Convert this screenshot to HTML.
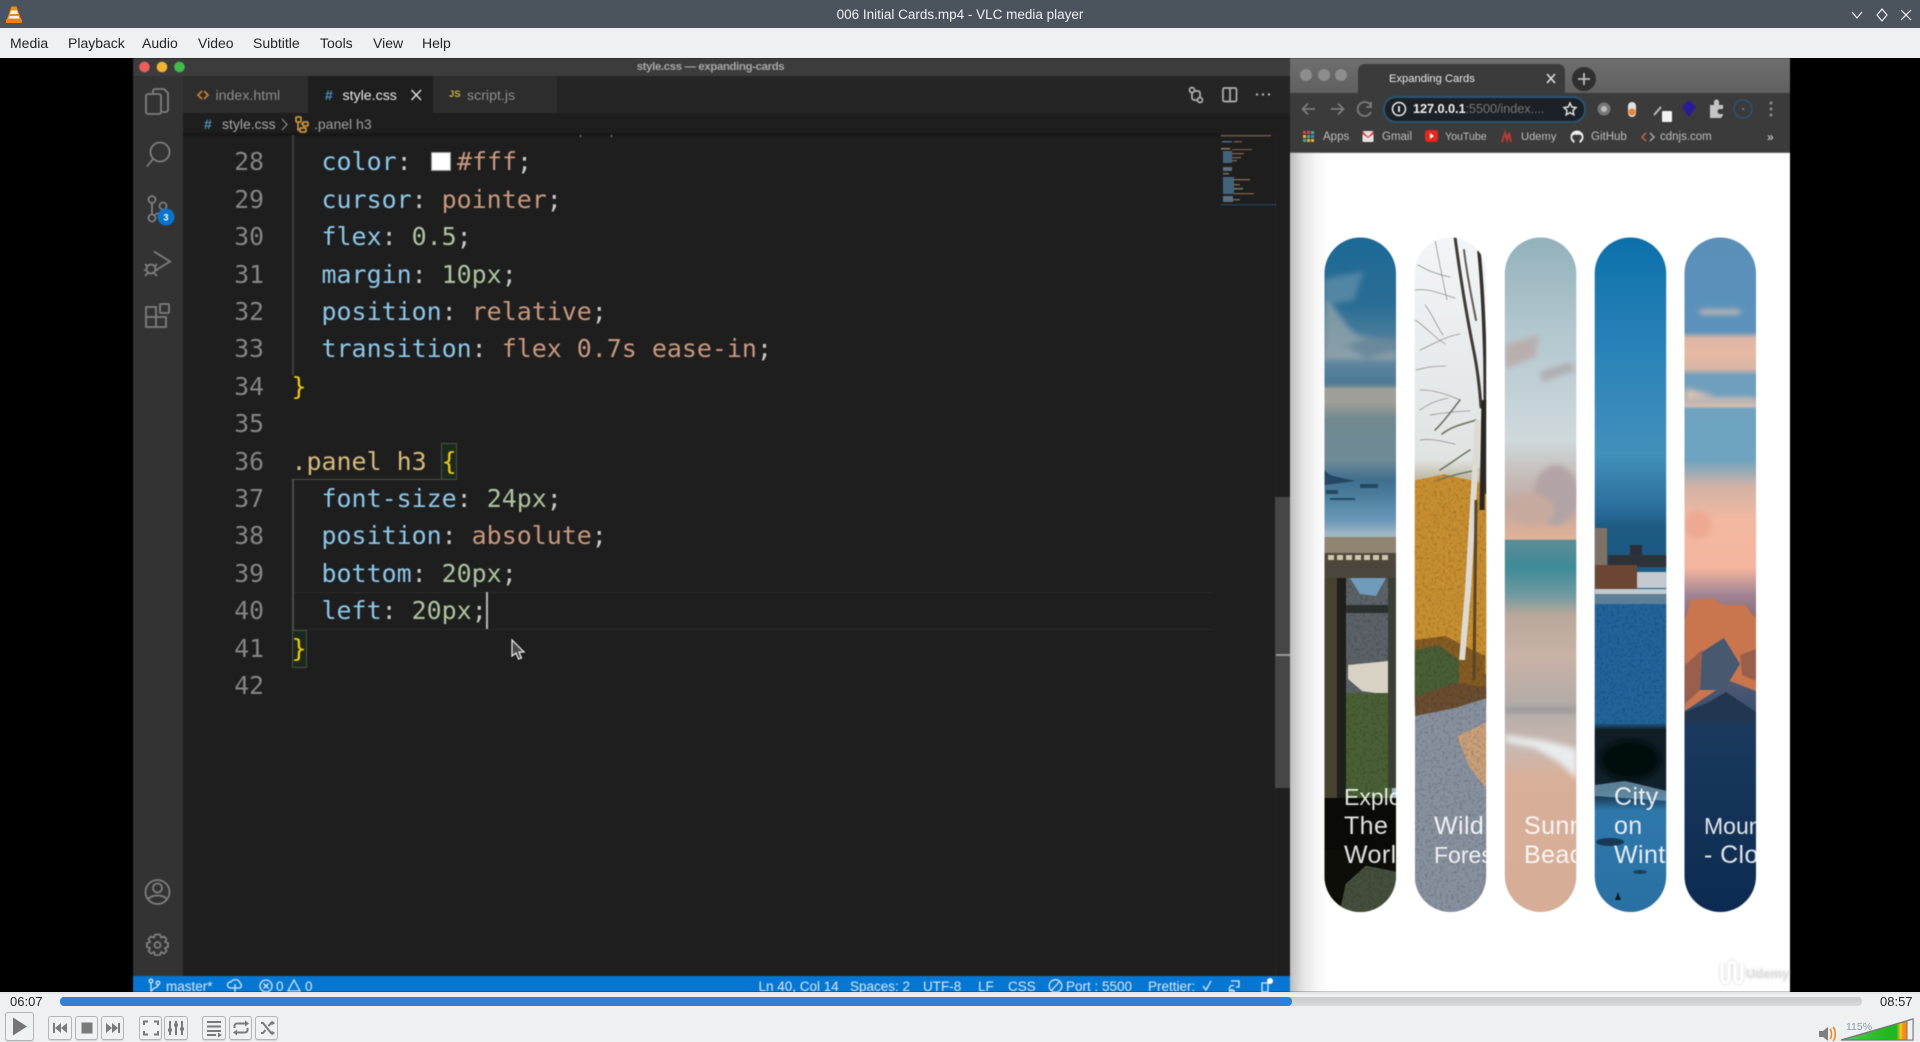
<!DOCTYPE html>
<html><head><meta charset="utf-8"><title>006 Initial Cards.mp4 - VLC media player</title>
<style>
*{box-sizing:border-box}
html,body{margin:0;padding:0;width:1920px;height:1042px;overflow:hidden;background:#000;font-family:"Liberation Sans",sans-serif}
.t{position:absolute;white-space:nowrap;line-height:20px}
.b{position:absolute}
#video{position:absolute;left:0;top:58px;width:1920px;height:934px;background:#000;overflow:hidden}
#vi{position:absolute;left:0;top:-58px;width:1920px;height:1042px;filter:blur(.5px)}
#code,#nums{position:absolute;top:143.3px;font-family:"DejaVu Sans Mono","Liberation Mono",monospace;line-height:37.4px;white-space:pre}
#nums{left:220px;width:44px;text-align:right;color:#858585;font-size:24.75px}
#code{left:291.5px;color:#d4d4d4;font-size:24.95px}
.p{color:#8cc7ea}.v{color:#c8987f}.n{color:#aec3a0}.s{color:#d7ba7d}.y{color:#f2c80f}.w{color:#c8c8c8}
.sw{display:inline-block;width:30.3px;height:19px;position:relative;vertical-align:-2px}
.sw i{position:absolute;left:4px;top:-1px;width:20px;height:19px;background:#fff;border:1px solid #999}
.m{font-size:14px;color:#232629;top:33px}
.st{font-size:13.5px;color:#d5e6f6;top:977px}
.tb{position:absolute;top:1016px;height:23.5px;width:23.5px;background:#f0f1f2;border:1px solid #b4b5b7;border-radius:3px;box-shadow:0 1px 0 #d5d6d8}
.tb svg{position:absolute;left:0;top:0;width:22px;height:22px}
</style></head><body>
<div class="b" style="left:0;top:0;width:1920px;height:28px;background:#4b535d"></div>
<div class="b" style="left:0;top:28px;width:1920px;height:30px;background:#eff0f1"></div>
<svg class="b" style="left:5px;top:5px" width="18" height="19" viewBox="0 0 18 19"><path d="M6.5 1.5h5l5 14H1.500z" fill="#f28b12"/><path d="M6 5.500h6l1 3.500H5zM4.500 11h9l1 2.500h-11z" fill="#f5f3ee"/><rect x="1" y="14" width="16" height="4" rx="1" fill="#ee7f10"/></svg>
<div class="t" style="left:0;width:1920px;text-align:center;top:5px;font-size:13.5px;color:#eef0f1">006 Initial Cards.mp4 - VLC media player</div>
<svg class="b" style="left:1850px;top:6px" width="66" height="18" fill="none" stroke="#eef0f2" stroke-width="1.200"><path d="M2 6l5 6 5-6M32 3l-5 6 5 6 5-6zM51 4l10 10M61 4L51 14"/></svg>
<span class="t m" style="left:10px">Media</span><span class="t m" style="left:68px">Playback</span><span class="t m" style="left:142px">Audio</span><span class="t m" style="left:198px">Video</span><span class="t m" style="left:253px">Subtitle</span><span class="t m" style="left:320px">Tools</span><span class="t m" style="left:373px">View</span><span class="t m" style="left:422px">Help</span>

<div id="video"><div id="vi">
<!-- VS Code window -->
<div class="b" style="left:132.500px;top:58px;width:1157.500px;height:934px;background:#1e1e1e"></div>
<div class="b" style="left:132.500px;top:58px;width:1157.500px;height:18px;background:#3c3c3c"></div>
<div class="b" style="left:132.500px;top:76px;width:50.500px;height:900px;background:#333"></div>
<div class="b" style="left:183px;top:76px;width:1107px;height:37px;background:#252526"></div>
<div class="b" style="left:183px;top:76px;width:125px;height:37px;background:#2d2d2d"></div>
<div class="b" style="left:308px;top:76px;width:125px;height:37px;background:#1e1e1e"></div>
<div class="b" style="left:433px;top:76px;width:124px;height:37px;background:#2d2d2d"></div>
<div class="b" style="left:183px;top:133px;width:1037px;height:3px;background:#171717"></div>
<div class="t" style="left:132px;width:1157px;text-align:center;top:57px;font-size:11.300px;color:#a8a8a8;font-weight:bold;letter-spacing:-.3px">style.css — expanding-cards</div>
<span class="t" style="left:215.500px;top:85.500px;font-size:14.200px;color:#8d8d8d">index.html</span>
<span class="t" style="left:342.500px;top:85.500px;font-size:14.200px;color:#e8e8e8">style.css</span>
<span class="t" style="left:467px;top:85.500px;font-size:14.200px;color:#8d8d8d">script.js</span>
<span class="t" style="left:325px;top:85px;font-size:14px;font-weight:bold;color:#4f93bd">#</span>
<span class="t" style="left:204px;top:114px;font-size:14px;font-weight:bold;color:#4f93bd">#</span>
<span class="t" style="left:449px;top:85px;font-size:9.500px;font-weight:bold;color:#c0b03c">JS</span>
<span class="t" style="left:222px;top:114px;font-size:14px;color:#a8a8a8">style.css</span>
<span class="t" style="left:314px;top:114px;font-size:14px;color:#a0a0a0">.panel h3</span>

<!-- status bar -->
<div class="b" style="left:132.500px;top:976px;width:1157.500px;height:16px;background:#0577d2"></div>
<span class="t st" style="left:166px">master*</span><span class="t st" style="left:276px">0</span><span class="t st" style="left:305px">0</span>
<span class="t st" style="left:758.500px">Ln 40, Col 14</span><span class="t st" style="left:850px">Spaces: 2</span><span class="t st" style="left:923px">UTF-8</span><span class="t st" style="left:978px">LF</span><span class="t st" style="left:1008px">CSS</span><span class="t st" style="left:1066px">Port : 5500</span><span class="t st" style="left:1148px">Prettier:</span>

<!-- code -->
<div class="b" style="left:293px;top:591.500px;width:920px;height:38px;border-top:1.500px solid #2b2b2b;border-bottom:1.500px solid #2b2b2b"></div>
<div class="b" style="left:292px;top:135px;width:1.500px;height:240px;background:#3e3e3e"></div>
<div class="b" style="left:292px;top:479px;width:1.500px;height:152px;background:#4c4c4c"></div>
<div class="b" style="left:292px;top:478.500px;width:150px;height:1.500px;background:#52503f"></div>
<div class="b" style="left:440.500px;top:442.500px;width:16px;height:37.500px;border:1.500px solid #4a4f46;background:#1c2a1e"></div>
<div class="b" style="left:292px;top:630px;width:14.500px;height:37.500px;border:1.500px solid #4a4f46;background:#1c2a1e"></div>
<div id="nums">28
29
30
31
32
33
34
35
36
37
38
39
40
41
42</div>
<div id="code"><span class="p">  color</span><span class="w">: </span><span class="sw"><i></i></span><span class="v">#fff</span><span class="w">;</span>
<span class="p">  cursor</span><span class="w">: </span><span class="v">pointer</span><span class="w">;</span>
<span class="p">  flex</span><span class="w">: </span><span class="n">0.5</span><span class="w">;</span>
<span class="p">  margin</span><span class="w">: </span><span class="n">10px</span><span class="w">;</span>
<span class="p">  position</span><span class="w">: </span><span class="v">relative</span><span class="w">;</span>
<span class="p">  transition</span><span class="w">: </span><span class="v">flex 0.7s ease-in</span><span class="w">;</span>
<span class="y">}</span>

<span class="s">.panel h3 </span><span class="y">{</span>
<span class="p">  font-size</span><span class="w">: </span><span class="n">24px</span><span class="w">;</span>
<span class="p">  position</span><span class="w">: </span><span class="v">absolute</span><span class="w">;</span>
<span class="p">  bottom</span><span class="w">: </span><span class="n">20px</span><span class="w">;</span>
<span class="p">  left</span><span class="w">: </span><span class="n">20px</span><span class="w">;</span>
<span class="y">}</span></div>
<div class="b" style="left:486px;top:592px;width:2px;height:37px;background:#b5b5b5"></div>

<!-- scrollbar & minimap -->
<div class="b" style="left:1275px;top:135px;width:1px;height:841px;background:#2a2a2a"></div>
<div class="b" style="left:1275px;top:497px;width:15px;height:291px;background:#464646"></div>
<div class="b" style="left:1276px;top:654px;width:14px;height:2px;background:#9a9a9a"></div>
<svg class="b" style="left:1208px;top:130px;opacity:.75" width="70" height="80">
<g fill="#8a6a5c"><rect x="13" y="5" width="50" height="1.500"/></g>
<rect x="14" y="11" width="10" height="1.500" fill="#5a8aa8"/><rect x="26" y="11" width="8" height="1.500" fill="#8a6a5c"/>
<rect x="13" y="18" width="9" height="1.500" fill="#b5a070"/><rect x="24" y="19" width="20" height="1.200" fill="#8a6a5c"/>
<rect x="15" y="21" width="9" height="12" fill="#4d7c9a"/><rect x="24" y="23" width="12" height="1.300" fill="#9a7a60"/><rect x="24" y="27" width="9" height="1.300" fill="#9a7a60"/><rect x="24" y="30" width="5" height="1.300" fill="#9a7a60"/>
<rect x="15" y="37" width="9" height="4" fill="#6a8aa0"/><rect x="15" y="43" width="6" height="1.500" fill="#a09070"/>
<rect x="15" y="47" width="11" height="17" fill="#4d7c9a"/><rect x="26" y="49" width="16" height="1.500" fill="#9a7a60"/><rect x="26" y="54" width="6" height="1.500" fill="#9a7a60"/><rect x="26" y="58" width="9" height="1.500" fill="#8aa080"/><rect x="26" y="63" width="20" height="1.300" fill="#9a7a60"/>
<rect x="15" y="66" width="10" height="6" fill="#6a8aa0"/><rect x="25" y="69" width="7" height="1.500" fill="#9a7a60"/>
<rect x="13" y="74" width="55" height="1.500" fill="#28465c"/>
</svg>

<!-- Browser -->
<div class="b" style="left:1290px;top:58px;width:500px;height:35px;background:linear-gradient(#6f6f6f,#606060)"></div>
<div class="b" style="left:1290px;top:93px;width:500px;height:60px;background:#3b3b3b"></div>
<div class="b" style="left:1290px;top:152px;width:500px;height:1px;background:#666"></div>
<div class="b" style="left:1358px;top:64px;width:207px;height:29px;background:#3b3b3b;border-radius:7px 7px 0 0"></div>
<div class="b" style="left:1290px;top:153px;width:500px;height:839px;background:linear-gradient(90deg,#bdbdbd 0,#e2e2e2 12px,#f6f6f6 26px,#fff 40px)"></div>
<span class="t" style="left:1389px;top:69px;font-size:11.200px;color:#e8e8e8">Expanding Cards</span>
<div class="b" style="left:1383px;top:96px;width:203px;height:27px;border-radius:13px;background:#1b2126;border:2px solid #2a5474"></div>
<span class="t" style="left:1413px;top:99px;font-size:12.800px;color:#f0f0f0;font-weight:bold;letter-spacing:-.1px">127.0.0.1<span style="color:#777;font-weight:normal">:5500/index....</span></span>
<span class="t" style="left:1323px;top:127px;font-size:11.500px;color:#bdbdbd">Apps</span>
<span class="t" style="left:1382px;top:127px;font-size:11.500px;color:#bdbdbd">Gmail</span>
<span class="t" style="left:1445px;top:127px;font-size:10.600px;color:#bdbdbd">YouTube</span>
<span class="t" style="left:1521px;top:127px;font-size:11.200px;color:#bdbdbd">Udemy</span>
<span class="t" style="left:1591px;top:127px;font-size:11.500px;color:#bdbdbd">GitHub</span>
<span class="t" style="left:1660px;top:127px;font-size:11.500px;color:#bdbdbd">cdnjs.com</span>
<span class="t" style="left:1767px;top:127px;font-size:12px;font-weight:bold;color:#bdbdbd">»</span>

<svg class="b" style="left:0;top:0" width="1920" height="1042" viewBox="0 0 1920 1042">
<defs>
<clipPath id="c1"><rect x="1324.500" y="237.500" width="71.500" height="674.500" rx="35.700"/></clipPath>
<clipPath id="c2"><rect x="1414.700" y="237.500" width="71.500" height="674.500" rx="35.700"/></clipPath>
<clipPath id="c3"><rect x="1504.800" y="237.500" width="71.500" height="674.500" rx="35.700"/></clipPath>
<clipPath id="c4"><rect x="1594.700" y="237.500" width="71.500" height="674.500" rx="35.700"/></clipPath>
<clipPath id="c5"><rect x="1684.500" y="237.500" width="71.500" height="674.500" rx="35.700"/></clipPath>
<linearGradient id="g1" x1="0" x2="0" y1="237" y2="912" gradientUnits="userSpaceOnUse">
<stop offset="0" stop-color="#1c6a97"/><stop offset=".1" stop-color="#2a6d94"/><stop offset=".18" stop-color="#5f88a0"/><stop offset=".215" stop-color="#4f7a94"/><stop offset=".22" stop-color="#5f8296"/><stop offset=".225" stop-color="#a09e98"/><stop offset=".245" stop-color="#a09e98"/><stop offset=".27" stop-color="#70898f"/><stop offset=".33" stop-color="#6f8b96"/><stop offset=".36" stop-color="#3f6f8e"/><stop offset=".38" stop-color="#4b7c9c"/><stop offset=".42" stop-color="#6a98b8"/><stop offset=".44" stop-color="#9db6c6"/><stop offset="1" stop-color="#9db6c6"/></linearGradient>
<linearGradient id="g3" x1="0" x2="0" y1="237" y2="912" gradientUnits="userSpaceOnUse">
<stop offset="0" stop-color="#92b1ba"/><stop offset=".14" stop-color="#b3c7cf"/><stop offset=".3" stop-color="#cfd9dc"/><stop offset=".36" stop-color="#c4bab6"/><stop offset=".4" stop-color="#c2a89d"/><stop offset=".448" stop-color="#e2b297"/><stop offset=".449" stop-color="#5c8c96"/><stop offset=".49" stop-color="#3f8b99"/><stop offset=".53" stop-color="#6f9aa0"/><stop offset=".56" stop-color="#b8a89b"/><stop offset=".62" stop-color="#c9b2a6"/><stop offset=".69" stop-color="#b3aca8"/><stop offset=".76" stop-color="#c9b8b0"/><stop offset=".8" stop-color="#d8b09a"/><stop offset="1" stop-color="#d6ae98"/></linearGradient>
<linearGradient id="g4" x1="0" x2="0" y1="237" y2="912" gradientUnits="userSpaceOnUse">
<stop offset="0" stop-color="#0c70aa"/><stop offset=".17" stop-color="#2a83b8"/><stop offset=".32" stop-color="#4290bc"/><stop offset=".4" stop-color="#2b6f9d"/><stop offset=".43" stop-color="#1e5a82"/><stop offset=".54" stop-color="#1c5a86"/><stop offset=".62" stop-color="#1f608f"/><stop offset=".72" stop-color="#1f6089"/><stop offset=".73" stop-color="#101d25"/><stop offset=".82" stop-color="#10222c"/><stop offset=".85" stop-color="#2f78ac"/><stop offset="1" stop-color="#2a70a2"/></linearGradient>
<linearGradient id="g5" x1="0" x2="0" y1="237" y2="912" gradientUnits="userSpaceOnUse">
<stop offset="0" stop-color="#5a8fb8"/><stop offset=".14" stop-color="#5b92bc"/><stop offset=".15" stop-color="#dcb6a6"/><stop offset=".17" stop-color="#e8b9a2"/><stop offset=".195" stop-color="#d9b5a6"/><stop offset=".205" stop-color="#709fbd"/><stop offset=".235" stop-color="#6d9fbe"/><stop offset=".25" stop-color="#d8bcae"/><stop offset=".255" stop-color="#6fa3c0"/><stop offset=".33" stop-color="#6ea4bf"/><stop offset=".37" stop-color="#d3b3a6"/><stop offset=".42" stop-color="#f2b9a0"/><stop offset=".49" stop-color="#f5b69e"/><stop offset=".53" stop-color="#a08494"/><stop offset=".56" stop-color="#8c6f78"/><stop offset=".7" stop-color="#3b5070"/><stop offset=".71" stop-color="#1b3a5e"/><stop offset="1" stop-color="#0c2b52"/></linearGradient>
<linearGradient id="g2" x1="0" x2="0" y1="237" y2="912" gradientUnits="userSpaceOnUse">
<stop offset="0" stop-color="#f3f5f7"/><stop offset=".33" stop-color="#dfe3e2"/><stop offset=".36" stop-color="#bdb6a0"/><stop offset=".4" stop-color="#c99332"/><stop offset=".6" stop-color="#a87a30"/><stop offset=".63" stop-color="#4d5a32"/><stop offset=".67" stop-color="#5f5030"/><stop offset=".7" stop-color="#79818e"/><stop offset=".85" stop-color="#6d7889"/><stop offset="1" stop-color="#5a6678"/></linearGradient>
<filter id="bl"><feGaussianBlur stdDeviation="3"/></filter>
<filter id="sh" x="-20%" y="-40%" width="140%" height="180%"><feGaussianBlur in="SourceAlpha" stdDeviation="1.500"/><feColorMatrix values="0 0 0 0 .55 0 0 0 0 .55 0 0 0 0 .55 0 0 0 .8 0"/><feMerge><feMergeNode/><feMergeNode in="SourceGraphic"/></feMerge></filter>
<filter id="mot" x="0" y="0" width="1" height="1"><feTurbulence type="fractalNoise" baseFrequency=".35" numOctaves="2" seed="4" result="n"/><feColorMatrix in="n" values=".9 0 0 0 .5 .9 0 0 0 .5 .9 0 0 0 .5 0 0 0 0 1" result="g"/><feBlend in="SourceGraphic" in2="g" mode="multiply" result="m"/><feComposite in="m" in2="SourceAlpha" operator="in"/></filter>
</defs>

<!-- Card 1 -->
<g clip-path="url(#c1)">
<rect x="1324" y="237" width="73" height="675" fill="url(#g1)"/>
<g filter="url(#bl)"><path d="M1324 300c14 4 20 30 36 36l36 4v20h-72z" fill="#a3acae" opacity=".65"/><path d="M1345 345l25-8 26 2v12l-30 8z" fill="#5e8099" opacity=".7"/><path d="M1324 280c10-6 30-4 40-10l-10 30-30 6z" fill="#7da0b4" opacity=".5"/></g>
<path d="M1324 470l6 5 16 4 10 2-32 4zM1326 490h12v4h-12zM1360 484h18v4h-18zM1330 498h25v2h-25z" fill="#254862"/>
<rect x="1324" y="537" width="73" height="16" fill="#8f8571"/><rect x="1324" y="553" width="73" height="9" fill="#4f483a"/><g fill="#cfc6b0"><rect x="1328" y="555" width="6" height="5"/><rect x="1337" y="555" width="6" height="5"/><rect x="1346" y="555" width="6" height="5"/><rect x="1355" y="555" width="6" height="5"/><rect x="1364" y="555" width="6" height="5"/><rect x="1373" y="555" width="6" height="5"/><rect x="1382" y="555" width="6" height="5"/></g>
<rect x="1324" y="562" width="73" height="18" fill="#4a463c"/>
<g filter="url(#mot)"><rect x="1346" y="578" width="44" height="120" fill="#5c6268"/></g>
<path d="M1350 578h36l-10 18-16-2z" fill="#6f9cbc"/>
<path d="M1346 605h44v8h-44z" fill="#2c2f2d"/>
<path d="M1348 665l40-4v34l-26-4-14-12z" fill="#d8d2c4"/>
<g filter="url(#mot)"><rect x="1346" y="693" width="46" height="112" fill="#4a6034"/></g>
<rect x="1324" y="578" width="22" height="332" fill="#45422f"/><rect x="1337" y="578" width="9" height="270" fill="#1e1f1a"/>
<rect x="1388" y="578" width="9" height="210" fill="#3a3f35"/>
<rect x="1324" y="798" width="73" height="60" fill="#0a0a06"/>
<rect x="1324" y="850" width="73" height="62" fill="#0d0e08"/>
<g filter="url(#mot)"><path d="M1340 912l6-28 20-18 30 6v40z" fill="#454f3b"/></g>
</g>
<!-- Card 2 -->
<g clip-path="url(#c2)">
<rect x="1414" y="237" width="73" height="470" fill="url(#g2)"/>
<g filter="url(#mot)"><path d="M1415 480l30-6 42 10v190l-72 0z" fill="#c88f30"/><path d="M1415 640l30-4 40 20v40l-70 10z" fill="#855c24"/><path d="M1415 650l24-5 20 15 0 30-44 10z" fill="#4a5f34"/><path d="M1415 697l40-14 32 4v15l-72 15z" fill="#6a4e30"/><path d="M1415 716l40-8 32-10v216h-72z" fill="#88919f"/><path d="M1487 722l-30 14 12 30 18 24z" fill="#c9a07a"/></g>
<g fill="none" stroke-linecap="round">
<path d="M1455 237c4 30 10 70 18 110 5 24 7 45 8 60" stroke="#3f3a36" stroke-width="3"/><path d="M1479 252c3 30 5 70 6 110l1 130" stroke="#35302c" stroke-width="3.500"/><path d="M1464 250c3 25 8 50 12 70" stroke="#615b55" stroke-width="2"/>
<path d="M1415 290c14-2 26 4 40 8M1420 350c14-6 26-14 40-16M1415 320c10 6 20 18 30 24M1420 390c14 0 26 4 40 10M1435 240c4 20 8 42 12 60M1416 370c10-3 20-4 30-4M1430 415c14-2 26-4 40-4M1420 440c12-2 24 2 35 4M1418 265c10 6 22 10 32 12M1425 305c8 10 12 22 18 30M1420 410c8-6 18-10 28-12" stroke="#95928f" stroke-width=".8"/>
<path d="M1460 400c-8 10-16 22-25 30M1470 450c-10 6-20 14-30 20M1478 470c-12 2-28 6-40 10M1476 420c-12 4-24 6-34 14" stroke="#6b7668" stroke-width="1.600"/>
</g>
<path d="M1478 420l-10 170-6 70" fill="none" stroke="#dcdad2" stroke-width="6"/>
<path d="M1484 400l-2 110" fill="none" stroke="#2a2622" stroke-width="5"/><path d="M1476 500l-2 180" fill="none" stroke="#5a4526" stroke-width="3"/>
</g>
<!-- Card 3 -->
<g clip-path="url(#c3)">
<rect x="1504" y="237" width="73" height="675" fill="url(#g3)"/>
<g filter="url(#bl)"><path d="M1505 345l34-10-4 22-30 12z" fill="#b9a7a5" opacity=".8"/><path d="M1540 372l30-10 6 8-34 12z" fill="#aaa6a6" opacity=".8"/><ellipse cx="1556" cy="495" rx="22" ry="30" fill="#b2a3a6"/><ellipse cx="1532" cy="510" rx="22" ry="16" fill="#c7aa9e"/></g>
<g filter="url(#bl)"><path d="M1505 742l30 6 25 15 17 16v-30l-30-8-42-6z" fill="#e8ecee"/><path d="M1505 708h72v4h-72z" fill="#7a8084" opacity=".7"/></g>
</g>
<!-- Card 4 -->
<g clip-path="url(#c4)">
<rect x="1594" y="237" width="73" height="675" fill="url(#g4)"/>
<rect x="1595" y="528" width="12" height="45" fill="#7e7264"/>
<rect x="1630" y="545" width="12" height="22" fill="#2c2f35"/><rect x="1608" y="555" width="60" height="12" fill="#2c3238"/>
<rect x="1595" y="565" width="42" height="24" fill="#6c4634"/><rect x="1637" y="572" width="30" height="16" fill="#c4c9cf"/>
<rect x="1595" y="589" width="73" height="5" fill="#c0cad2"/><rect x="1595" y="594" width="73" height="10" fill="#5f7f96"/>
<g filter="url(#mot)"><rect x="1595" y="604" width="73" height="120" fill="#22649a"/></g>
<g filter="url(#bl)"><ellipse cx="1630" cy="760" rx="30" ry="20" fill="#05090c"/></g>
<path d="M1595 785l30-4 42 10v10l-72-5z" fill="#7daac8" opacity=".7"/>
<ellipse cx="1610" cy="842" rx="14" ry="4" fill="#163a55"/><ellipse cx="1640" cy="872" rx="7" ry="2" fill="#1a3f5a"/><path d="M1615 900l3-8 3 8z" fill="#0d1c28"/>
</g>
<!-- Card 5 -->
<g clip-path="url(#c5)">
<rect x="1684" y="237" width="73" height="675" fill="url(#g5)"/>
<g filter="url(#bl)"><path d="M1685 388l30 8-30 2zM1685 398h70v3h-70zM1700 310h40v4h-40z" fill="#e0c2b0"/><ellipse cx="1698" cy="525" rx="14" ry="14" fill="#eda992"/></g>
<path d="M1685 620l6-20 22-2 10 7 22 0 11 14v72l-26-10-30 20-15 10z" fill="#c9764f"/>
<path d="M1702 652l22-14 16 26-16 26-24 0z" fill="#47586f"/><path d="M1685 665l17-15-2 40-15 14zM1740 655l16-6 0 32-14-6z" fill="#9a5f4c"/>
<path d="M1685 712l24-10 17-10 15 10 15 10v10h-71z" fill="#22374f"/>
</g>
<g font-family="Liberation Sans,sans-serif" font-size="25" letter-spacing=".4" fill="#fff" fill-opacity=".88">
<g clip-path="url(#c1)"><text x="1344" y="805" font-size="23" letter-spacing="0">Explore</text><text x="1344" y="834">The</text><text x="1344" y="863">World</text></g>
<g clip-path="url(#c2)"><text x="1434" y="834">Wild</text><text x="1434" y="863" font-size="23" letter-spacing="0">Forest</text></g>
<g clip-path="url(#c3)"><text x="1524" y="834">Sunny</text><text x="1524" y="863">Beach</text></g>
<g clip-path="url(#c4)"><text x="1614" y="805">City</text><text x="1614" y="834">on</text><text x="1614" y="863">Winter</text></g>
<g clip-path="url(#c5)"><text x="1704" y="834" font-size="23" letter-spacing="0">Mountains</text><text x="1704" y="863">- Clouds</text></g>
</g>
<!-- Udemy watermark -->
<g filter="url(#sh)"><path d="M1722 964v12c0 9 7 9 7 0v-10c0-5 6-5 6 0v10c0 9 7 9 7 0v-12" fill="none" stroke="#fff" stroke-width="3"/>
<text x="1746" y="978" font-family="Liberation Sans,sans-serif" font-size="13" font-weight="bold" fill="#e4e4e4">Udemy</text></g>

<!-- traffic lights -->
<circle cx="144.500" cy="67" r="5.300" fill="#ec5f56"/><circle cx="162" cy="67" r="5.300" fill="#f4b32f"/><circle cx="179.500" cy="67" r="5.300" fill="#3fbc4a"/>

<!-- activity icons -->
<g fill="none" stroke="#7e7e7e" stroke-width="1.800">
<path d="M153 94v-3a2 2 0 0 1 2-2h9l4 4v17a2 2 0 0 1-2 2h-4"/><path d="M148 94h11a2 2 0 0 1 2 2v16a2 2 0 0 1-2 2h-11a2 2 0 0 1-2-2V96a2 2 0 0 1 2-2z"/>
<circle cx="160" cy="152" r="9.500"/><path d="M153 159l-6 7.500"/>
<circle cx="152" cy="199.500" r="3.500"/><circle cx="163" cy="206" r="3.500"/><circle cx="152" cy="218" r="3.500"/><path d="M152 203v11.500M163 209.500c0 4-6 3-9 6"/>
<path d="M154 251.500l16 10-13 8"/><circle cx="151" cy="269" r="4.500"/><path d="M145 264l3 3M157 264l-3 3M144 270h3M158 270h-3M145 276l3-3M157 276l-3-3"/>
<path d="M146 307h10v10h10v10h-20zM146 317h10v10"/><rect x="160" y="304" width="9" height="9" rx="1"/>
<circle cx="157.500" cy="892" r="12"/><circle cx="157.500" cy="888" r="4.500"/><path d="M148 900c2-6 17-6 19 0"/>
<circle cx="157.500" cy="945" r="3"/><path d="M157.500 934.500l2.500 0 1 3 3-1 2.500 2.500-1.500 3 3 1v4l-3 1 1.500 3-2.500 2.500-3-1.500-1 3h-5l-1-3-3 1.500-2.500-2.500 1.500-3-3-1v-4l3-1-1.500-3 2.500-2.500 3 1 1-3z"/>
</g>
<circle cx="166" cy="217" r="8.500" fill="#0a74cc"/><text x="166" y="220.500" font-family="Liberation Sans,sans-serif" font-size="9" font-weight="bold" fill="#fff" text-anchor="middle">3</text>

<!-- tab & breadcrumb icons -->
<path d="M202 91l-4 4 4 4M204 91l4 4-4 4" fill="none" stroke="#c67a35" stroke-width="1.800"/>
<path d="M411.500 90l9.500 10M421 90l-9.500 10" stroke="#e0e0e0" stroke-width="1.400"/>
<path d="M282 119l5 5.500-5 5.500" fill="none" stroke="#8a8a8a" stroke-width="1.200"/>
<g fill="none" stroke="#c9923e" stroke-width="1.700"><rect x="296" y="117" width="5" height="5" rx="1"/><rect x="303" y="122" width="5" height="4" rx="1"/><rect x="300" y="128" width="6" height="4" rx="1"/><path d="M298 122v8h2M301 124h2"/></g>
<path d="M580 136h1M611 136h1" stroke="#8a9a80" stroke-width="2"/>
<!-- editor actions -->
<g fill="none" stroke="#b0b0b0" stroke-width="1.700"><circle cx="1192" cy="90" r="2.500"/><circle cx="1200" cy="100" r="2.500"/><path d="M1194 91h4a2 2 0 0 1 2 2v5M1192 93v5a2 2 0 0 0 2 2h4"/><rect x="1223" y="88" width="13.500" height="13.500" rx="1.500"/><path d="M1230 88v13.500"/></g>
<g fill="#b0b0b0"><circle cx="1257" cy="94.500" r="1.200"/><circle cx="1263" cy="94.500" r="1.200"/><circle cx="1269" cy="94.500" r="1.200"/></g>
<!-- status icons -->
<g fill="none" stroke="#d5e6f6" stroke-width="1.300">
<circle cx="151" cy="981" r="1.800"/><circle cx="158" cy="983" r="1.800"/><path d="M151 983v9M158 985c0 3-5 2-6 6"/>
<path d="M230 988a3 3 0 0 1 1-6 5 5 0 0 1 9 1 3 3 0 0 1 0 5zM235 984v8"/>
<circle cx="266" cy="986" r="6"/><path d="M263.500 983.500l5 5M268.500 983.500l-5 5"/>
<path d="M294 980l6 11h-12z"/>
<circle cx="1055.500" cy="986" r="6.300"/><path d="M1051 991l9-10"/>
<path d="M1203 986l3 4 5-9"/>
<path d="M1231 981h8v6h-3M1234 986a3 3 0 1 0 0 5M1229 992c1-3 4-3 6 0"/>
<path d="M1262 983h6v9h-6z"/>
</g>
<circle cx="1270" cy="981" r="3" fill="#fff"/>

<!-- browser chrome icons -->
<g fill="#8d8d8d"><circle cx="1306" cy="75" r="6"/><circle cx="1324" cy="75" r="6"/><circle cx="1341" cy="75" r="6"/></g>
<path d="M1547 74l8 9M1555 74l-8 9" stroke="#ddd" stroke-width="1.600"/>
<circle cx="1584" cy="79" r="12" fill="#303030"/><path d="M1584 73v12M1578 79h12" stroke="#bbb" stroke-width="1.800"/>
<g fill="none" stroke="#7c7c7c" stroke-width="1.800"><path d="M1315 109h-12M1308 103.500l-5.500 5.500 5.500 5.500M1331 109h12M1338 103.500l5.500 5.500-5.500 5.500"/><path d="M1371 106a7 7 0 1 0 0 6M1371 102v5h-5"/></g>
<circle cx="1399" cy="109" r="6.500" fill="none" stroke="#eee" stroke-width="1.500"/><path d="M1399 106v6" stroke="#eee" stroke-width="1.800"/>
<path d="M1570 103l1.800 4 4.200.5-3 3 .8 4.300-3.800-2.200-3.800 2.200.8-4.300-3-3 4.200-.5z" fill="none" stroke="#ddd" stroke-width="1.500"/>
<circle cx="1604" cy="109" r="6.500" fill="#777"/><circle cx="1604" cy="109" r="3" fill="#bbb"/>
<rect x="1628" y="102" width="8" height="15" rx="4" fill="#e4e0dc"/><circle cx="1632" cy="112" r="3.500" fill="#e7873a"/>
<path d="M1654 115l7-8" stroke="#bbb" stroke-width="2"/><rect x="1662" y="111" width="10" height="11" rx="1" fill="#f2f2f2"/>
<path d="M1689 100l7 7-7 10-7-10z" fill="#2a1a9a"/>
<path d="M1710 105h4v-3a2.500 2.500 0 0 1 5 0v3h4v4h-3a2.500 2.500 0 0 0 0 5h3v1l-2 3h-11z" fill="#c4c4c4"/>
<circle cx="1743" cy="109" r="9" fill="none" stroke="#2b5470" stroke-width="1.500"/><circle cx="1743" cy="109" r="1" fill="#888"/>
<g fill="#8a8a8a"><circle cx="1771" cy="103" r="1.500"/><circle cx="1771" cy="109" r="1.500"/><circle cx="1771" cy="115" r="1.500"/></g>
<!-- bookmark icons -->
<g><rect x="1303" y="131" width="3" height="3" fill="#d44"/><rect x="1307" y="131" width="3" height="3" fill="#d44"/><rect x="1311" y="131" width="3" height="3" fill="#4a8"/><rect x="1303" y="135" width="3" height="3" fill="#e9b53c"/><rect x="1307" y="135" width="3" height="3" fill="#4a8"/><rect x="1311" y="135" width="3" height="3" fill="#48c"/><rect x="1303" y="139" width="3" height="3" fill="#4a8"/><rect x="1307" y="139" width="3" height="3" fill="#e9b53c"/><rect x="1311" y="139" width="3" height="3" fill="#e9b53c"/></g>
<rect x="1362.500" y="131" width="11" height="11" rx="1" fill="#e9e4e4"/><path d="M1362.500 131l5.500 6 5.500-6v3l-5.500 4-5.500-4z" fill="#d9372c"/>
<rect x="1425" y="130" width="13" height="12" rx="3" fill="#e8251c"/><path d="M1430 133v6l4-3z" fill="#fff"/>
<path d="M1502 142l3-9 2 7 2-7 2 9" fill="none" stroke="#b83a34" stroke-width="2"/>
<circle cx="1577" cy="137" r="6.500" fill="#eee"/><path d="M1574.500 143.500v-3c-2-1-3-3-1.800-5 1.500-1 3.300-1 4.300-.5 1-.5 2.800-.5 4.300.5 1 2 0 4-1.800 5v3z" fill="#3b3b3b"/>
<path d="M1646 133l-4 4 4 4" fill="none" stroke="#c9653a" stroke-width="1.500"/><path d="M1650 133l4 4-4 4" fill="none" stroke="#aaa" stroke-width="1.500"/>

<!-- mouse cursor -->
<path d="M512 640v16l4-3 2.500 6 3-1-2.500-6 5 0z" fill="#4a4a4a" stroke="#eee" stroke-width="1.200"/>
</svg>
</div></div>

<!-- Controls -->
<div class="b" style="left:0;top:992px;width:1920px;height:50px;background:#eff0f1"></div>
<div class="b" style="left:0;top:992px;width:1920px;height:2px;background:#e5e6e7"></div>
<span class="t" style="left:10px;top:992px;font-size:13px;color:#232629">06:07</span>
<span class="t" style="left:1880px;top:992px;font-size:13px;color:#232629">08:57</span>
<div class="b" style="left:59.500px;top:997px;width:1802.500px;height:8.500px;border-radius:4px;background:linear-gradient(#c9cacc,#d9dadc)"></div>
<div class="b" style="left:59.500px;top:997px;width:1232.500px;height:8.500px;border-radius:4px;background:#2f80d6"></div>

<div class="tb" style="left:4.500px;top:1012px;width:29px;height:29px"><svg style="width:27px;height:27px" viewBox="0 0 27 27"><path d="M7 4.500l14 9-14 9z" fill="#757575"/></svg></div>
<div class="tb" style="left:48px"><svg viewBox="0 0 22 22" fill="#7a7a7a"><rect x="4" y="6" width="2" height="10"/><path d="M12 6v10l-6-5zM18 6v10l-6-5z"/></svg></div>
<div class="tb" style="left:74.500px"><svg viewBox="0 0 22 22" fill="#7a7a7a"><rect x="5.500" y="5.500" width="11" height="11"/></svg></div>
<div class="tb" style="left:100.500px"><svg viewBox="0 0 22 22" fill="#7a7a7a"><rect x="16" y="6" width="2" height="10"/><path d="M4 6v10l6-5zM10 6v10l6-5z"/></svg></div>
<div class="tb" style="left:138.500px"><svg viewBox="0 0 22 22" fill="none" stroke="#7a7a7a" stroke-width="2"><path d="M4 8V4.500h4M14 4.500h4V8M18 14v3.500h-4M8 17.500H4V14"/></svg></div>
<div class="tb" style="left:164px"><svg viewBox="0 0 22 22" fill="none" stroke="#7a7a7a" stroke-width="2"><path d="M5 4v14M11 4v14M17 4v14"/><path d="M3 13h4M9 8h4M15 12h4" stroke-width="3"/></svg></div>
<div class="tb" style="left:202px"><svg viewBox="0 0 22 22" fill="none" stroke="#7a7a7a" stroke-width="2"><path d="M4 5h14M4 9.500h14M4 14h14M4 18h9"/><path d="M15 15.500l4 2.500-4 2.500z" fill="#7a7a7a" stroke="none"/></svg></div>
<div class="tb" style="left:228.500px"><svg viewBox="0 0 22 22" fill="none" stroke="#7a7a7a" stroke-width="2"><path d="M17 6.500H7a2.500 2.500 0 0 0-2.500 2.500v2M5 15.500h10a2.500 2.500 0 0 0 2.500-2.500v-2"/><path d="M15 3.500l4 3-4 3zM7 12.500l-4 3 4 3z" fill="#7a7a7a" stroke="none"/></svg></div>
<div class="tb" style="left:254.500px"><svg viewBox="0 0 22 22" fill="none" stroke="#7a7a7a" stroke-width="2"><path d="M5 6h2l8 10h1M5 16h2l2.500-3M12.500 9L15 6h1"/><path d="M15.500 3.500l3.500 2.500-3.500 2.500zM15.500 13.500l3.500 2.500-3.500 2.500z" fill="#7a7a7a" stroke="none"/></svg></div>

<svg class="b" style="left:1815px;top:1015px" width="105" height="27" viewBox="0 0 105 27">
<defs><linearGradient id="vol" x1="0" x2="1" y1="0" y2="0"><stop offset="0" stop-color="#59c95a"/><stop offset=".7" stop-color="#1db91d"/><stop offset=".84" stop-color="#22b820"/><stop offset=".9" stop-color="#f2c81a"/><stop offset=".95" stop-color="#f68a10"/><stop offset="1" stop-color="#f68a10"/></linearGradient></defs>
<path d="M4 16h4l5-4v14l-5-4H4z" fill="#7f7f7f"/><path d="M15 14c2 2 2 8 0 10M18 12c3 3 3 11 0 14" fill="none" stroke="#f08a1e" stroke-width="1.600"/>
<path d="M27 24.500L92 6v19z" fill="url(#vol)"/>
<path d="M26 25L98 4v21z" fill="none" stroke="#777" stroke-width="1.300"/>
<path d="M92 6l6-2v21h-6z" fill="#eff0f1" stroke="#777" stroke-width="1"/>
<text x="31" y="15" font-family="Liberation Sans,sans-serif" font-size="10.500" fill="#8c9ab0">115%</text>
</svg>
</body></html>
